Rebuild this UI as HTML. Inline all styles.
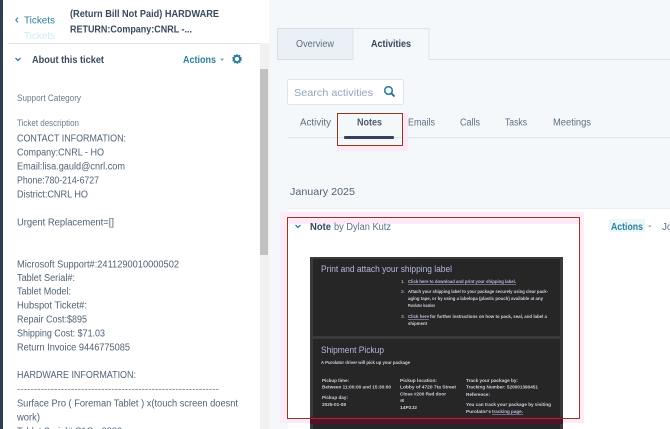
<!DOCTYPE html>
<html><head><meta charset="utf-8">
<style>
html,body{margin:0;padding:0}
body{width:670px;height:429px;overflow:hidden;position:relative;background:#f5f8fa}
svg{position:absolute;left:0;top:0;display:block}
text{font-family:"Liberation Sans",sans-serif;white-space:pre}
.b{font-size:10px;fill:#516274;filter:url(#s)}
.n{font-size:9.800px;fill:#5c6f82;filter:url(#s)}
.k{font-size:9.700px;fill:#33475b;font-weight:bold;filter:url(#s)}
.t{font-size:9.800px;fill:#2f7f9c;font-weight:bold;filter:url(#s)}
.d{font-size:4.800px;fill:#cfd0da;font-weight:bold;filter:url(#m)}
.u{font-size:4.800px;fill:#b9bbe0;font-weight:bold;text-decoration:underline;filter:url(#m)}
.h{fill:#b4b6dc;filter:url(#s)}
</style></head><body>
<svg width="670" height="429" viewBox="0 0 670 429" xmlns="http://www.w3.org/2000/svg">
<defs>
<filter id="s" x="-5%" y="-30%" width="110%" height="160%"><feGaussianBlur stdDeviation=".25"/></filter>
<filter id="m" x="-5%" y="-50%" width="110%" height="200%"><feGaussianBlur stdDeviation=".35"/></filter>
</defs>

<!-- left panel -->
<rect x="0" y="0" width="3" height="429" fill="#2d3e50"/>
<rect x="3" y="0" width="266" height="429" fill="#fff"/>
<rect x="260" y="43" width="9" height="386" fill="#f1f1f1"/>
<rect x="260" y="69" width="8" height="186" fill="#c1c1c1"/>
<rect x="8" y="43" width="252" height="1" fill="#dfe3eb"/>

<path d="M18 17.500 15.800 20 18 22.500" fill="none" stroke="#2f7f9c" stroke-width="1"/>
<text class="t" x="24" y="23.500" textLength="31" lengthAdjust="spacingAndGlyphs" style="font-weight:normal;font-size:10.500px">Tickets</text>
<text x="24" y="39" textLength="31" lengthAdjust="spacingAndGlyphs" font-size="10.500" fill="#cdebf3">Tickets</text>
<text class="k" x="70" y="17" textLength="149" lengthAdjust="spacingAndGlyphs" style="fill:#3a4a5c">(Return Bill Not Paid) HARDWARE</text>
<text class="k" x="70" y="32.500" textLength="122" lengthAdjust="spacingAndGlyphs" style="fill:#3a4a5c">RETURN:Company:CNRL -...</text>

<path d="M15.500 58 18 60.500 20.500 58" fill="none" stroke="#2f7f9c" stroke-width="1.300"/>
<text class="k" x="32" y="63" textLength="72" lengthAdjust="spacingAndGlyphs" style="fill:#3a4a5c">About this ticket</text>
<text class="t" x="183" y="63" textLength="33" lengthAdjust="spacingAndGlyphs">Actions</text>
<path d="M220 58.500h4l-2 2.500z" fill="#7f9fb2"/>
<circle cx="237" cy="59" r="3.100" fill="none" stroke="#2f7f9c" stroke-width="2"/>
<circle cx="237" cy="59" r="4.200" fill="none" stroke="#2f7f9c" stroke-width="1.300" stroke-dasharray="1.500 1.200"/>

<text class="n" x="17" y="101" textLength="64" lengthAdjust="spacingAndGlyphs" style="font-size:9px;fill:#6b7a8c">Support Category</text>
<text class="n" x="17" y="126" textLength="62" lengthAdjust="spacingAndGlyphs" style="font-size:9px;fill:#6b7a8c">Ticket description</text>

<text class="b" x="17" y="141.500" textLength="109" lengthAdjust="spacingAndGlyphs">CONTACT INFORMATION:</text>
<text class="b" x="17" y="155.500" textLength="87" lengthAdjust="spacingAndGlyphs">Company:CNRL - HO</text>
<text class="b" x="17" y="169.500" textLength="108" lengthAdjust="spacingAndGlyphs">Email:lisa.gauld@cnrl.com</text>
<text class="b" x="17" y="183.500" textLength="82" lengthAdjust="spacingAndGlyphs">Phone:780-214-6727</text>
<text class="b" x="17" y="197.500" textLength="71" lengthAdjust="spacingAndGlyphs">District:CNRL HO</text>
<text class="b" x="17" y="225.500" textLength="97" lengthAdjust="spacingAndGlyphs">Urgent Replacement=[]</text>
<text class="b" x="17" y="267.500" textLength="162" lengthAdjust="spacingAndGlyphs">Microsoft Support#:2411290010000502</text>
<text class="b" x="17" y="281" textLength="58" lengthAdjust="spacingAndGlyphs">Tablet Serial#:</text>
<text class="b" x="17" y="294.500" textLength="54" lengthAdjust="spacingAndGlyphs">Tablet Model:</text>
<text class="b" x="17" y="308.500" textLength="70" lengthAdjust="spacingAndGlyphs">Hubspot Ticket#:</text>
<text class="b" x="17" y="322.500" textLength="70" lengthAdjust="spacingAndGlyphs">Repair Cost:$895</text>
<text class="b" x="17" y="336.500" textLength="88" lengthAdjust="spacingAndGlyphs">Shipping Cost: $71.03</text>
<text class="b" x="17" y="350.500" textLength="113" lengthAdjust="spacingAndGlyphs">Return Invoice 9446775085</text>
<text class="b" x="17" y="378" textLength="119" lengthAdjust="spacingAndGlyphs">HARDWARE INFORMATION:</text>
<text class="b" x="17" y="391.500" textLength="202" lengthAdjust="spacingAndGlyphs" style="font-size:8px">------------------------------------------------------------</text>
<text class="b" x="17" y="406.500" textLength="221" lengthAdjust="spacingAndGlyphs">Surface Pro ( Foreman Tablet ) x(touch screen doesnt</text>
<text class="b" x="17" y="420.500" textLength="23" lengthAdjust="spacingAndGlyphs">work)</text>
<text class="b" x="17" y="434.500" textLength="105" lengthAdjust="spacingAndGlyphs">Tablet Serial#:C1Q - 8886</text>

<!-- main tabs -->
<rect x="277" y="59" width="393" height="1" fill="#dbe2ea"/>
<rect x="277.500" y="28.500" width="75.500" height="31" fill="#eaf0f6" stroke="#d5dde6"/>
<path d="M353 60V28.500H429V60" fill="#f5f8fa" stroke="#dfe3eb"/>
<text class="n" x="296" y="47" textLength="38" lengthAdjust="spacingAndGlyphs">Overview</text>
<text class="k" x="371" y="47" textLength="40" lengthAdjust="spacingAndGlyphs">Activities</text>

<!-- search -->
<rect x="287.500" y="79.500" width="116" height="25" rx="2" fill="#fff" stroke="#dfe3eb"/>
<text class="n" x="294" y="96" textLength="79" lengthAdjust="spacingAndGlyphs" style="font-size:10.500px;fill:#94a5b8">Search activities</text>
<circle cx="388.500" cy="90.500" r="3.800" fill="none" stroke="#2f7f9c" stroke-width="1.600"/>
<path d="M391.300 93.300 394.500 96.500" stroke="#2d5f80" stroke-width="1.800"/>

<!-- sub tabs -->
<rect x="288" y="137" width="382" height="1" fill="#dfe3eb"/>
<path d="M337 146H403V113H408V151H337z" fill="#ffe8f6"/>
<text class="n" x="300" y="125.500" textLength="31" lengthAdjust="spacingAndGlyphs">Activity</text>
<text class="k" x="357" y="125.500" textLength="25" lengthAdjust="spacingAndGlyphs" style="fill:#4a5b6d">Notes</text>
<text class="n" x="408" y="125.500" textLength="27" lengthAdjust="spacingAndGlyphs">Emails</text>
<text class="n" x="460" y="125.500" textLength="20" lengthAdjust="spacingAndGlyphs">Calls</text>
<text class="n" x="505" y="125.500" textLength="22" lengthAdjust="spacingAndGlyphs">Tasks</text>
<text class="n" x="553" y="125.500" textLength="38" lengthAdjust="spacingAndGlyphs">Meetings</text>
<rect x="344" y="136" width="50" height="3" rx="1" fill="#33405e"/>
<rect x="337.500" y="113.500" width="65" height="32" fill="none" stroke="#8f3a1e"/>

<text class="b" x="290" y="195" textLength="65" lengthAdjust="spacingAndGlyphs" style="font-size:10.500px">January 2025</text>

<!-- card -->
<rect x="288" y="208" width="382" height="221" fill="#fff"/>
<rect x="288" y="208" width="382" height="1" fill="#eaf0f6"/>
<rect x="280" y="212" width="304" height="211" fill="#ffeaf8"/>
<rect x="288" y="224" width="291" height="194" fill="#fff"/>
<path d="M295.500 225 298 227.500 300.500 225" fill="none" stroke="#2f7f9c" stroke-width="1.300"/>
<text class="k" x="310" y="230" textLength="21" lengthAdjust="spacingAndGlyphs">Note</text>
<text class="n" x="334" y="230" textLength="57" lengthAdjust="spacingAndGlyphs">by Dylan Kutz</text>
<rect x="609" y="219" width="36" height="13" fill="#eaf8fb"/>
<text class="t" x="611" y="230" textLength="32" lengthAdjust="spacingAndGlyphs">Actions</text>
<path d="M648 225.500h3.500l-1.750 2z" fill="#8aa5b5"/>
<text class="n" x="662" y="230">Jo</text>

<!-- dark image -->
<rect x="310" y="257" width="253" height="172" fill="#3a3a3a"/>
<rect x="313" y="259" width="247" height="77" fill="#262627"/>
<rect x="313" y="339" width="247" height="90" fill="#262627"/>

<text class="h" x="321" y="272" textLength="131" lengthAdjust="spacingAndGlyphs" font-size="9">Print and attach your shipping label</text>
<text class="d" x="401" y="283" style="font-weight:normal">1.</text>
<text class="u" x="408" y="283" textLength="108" lengthAdjust="spacingAndGlyphs">Click here to download and print your shipping label.</text>
<text class="d" x="401" y="293" style="font-weight:normal">2.</text>
<text class="d" x="408" y="293" textLength="140" lengthAdjust="spacingAndGlyphs">Attach your shipping label to your package securely using clear pack-</text>
<text class="d" x="408" y="300" textLength="135" lengthAdjust="spacingAndGlyphs">aging tape, or by using a labelopa (plastic pouch) available at any</text>
<text class="d" x="408" y="307" textLength="27" lengthAdjust="spacingAndGlyphs">Purolator location</text>
<text class="d" x="401" y="318" style="font-weight:normal">3.</text>
<text class="u" x="408" y="318" textLength="21" lengthAdjust="spacingAndGlyphs">Click here</text>
<text class="d" x="430" y="318" textLength="117" lengthAdjust="spacingAndGlyphs">for further instructions on how to pack, seal, and label a</text>
<text class="d" x="408" y="325" textLength="19" lengthAdjust="spacingAndGlyphs">shipment</text>

<text class="h" x="321" y="353" textLength="63" lengthAdjust="spacingAndGlyphs" font-size="9.500">Shipment Pickup</text>
<text class="d" x="321" y="364" textLength="89" lengthAdjust="spacingAndGlyphs">A Purolator driver will pick up your package</text>
<text class="d" x="322" y="382" textLength="27" lengthAdjust="spacingAndGlyphs">Pickup time:</text>
<text class="d" x="322" y="388.500" textLength="69" lengthAdjust="spacingAndGlyphs">Between 11:00:00 and 15:30:00</text>
<text class="d" x="322" y="399" textLength="26" lengthAdjust="spacingAndGlyphs">Pickup day:</text>
<text class="d" x="322" y="406" textLength="24" lengthAdjust="spacingAndGlyphs">2025-01-08</text>
<text class="d" x="400" y="382" textLength="37" lengthAdjust="spacingAndGlyphs">Pickup location:</text>
<text class="d" x="400" y="388.500" textLength="56" lengthAdjust="spacingAndGlyphs">Lobby of 4720 7ta Street</text>
<text class="d" x="400" y="395.500" textLength="46" lengthAdjust="spacingAndGlyphs">Close #200 Red door</text>
<text class="d" x="400" y="402" textLength="4" lengthAdjust="spacingAndGlyphs">AB</text>
<text class="d" x="400" y="409" textLength="17" lengthAdjust="spacingAndGlyphs">14P2J2</text>
<text class="d" x="466" y="382" textLength="52" lengthAdjust="spacingAndGlyphs">Track your package by:</text>
<text class="d" x="466" y="388.500" textLength="72" lengthAdjust="spacingAndGlyphs">Tracking Number: 520001390451</text>
<text class="d" x="466" y="396" textLength="24" lengthAdjust="spacingAndGlyphs">Reference:</text>
<text class="d" x="466" y="406" textLength="85" lengthAdjust="spacingAndGlyphs">You can track your package by visiting</text>
<text class="d" x="466" y="413" textLength="25" lengthAdjust="spacingAndGlyphs">Purolator's</text>
<text class="u" x="492" y="413" textLength="31" lengthAdjust="spacingAndGlyphs">tracking page.</text>

<!-- annotation -->
<rect x="310" y="417" width="253" height="7" fill="#55102a"/>
<rect x="287.500" y="217.500" width="292" height="201" fill="none" stroke="#8f3a1e"/>
</svg>
</body></html>
